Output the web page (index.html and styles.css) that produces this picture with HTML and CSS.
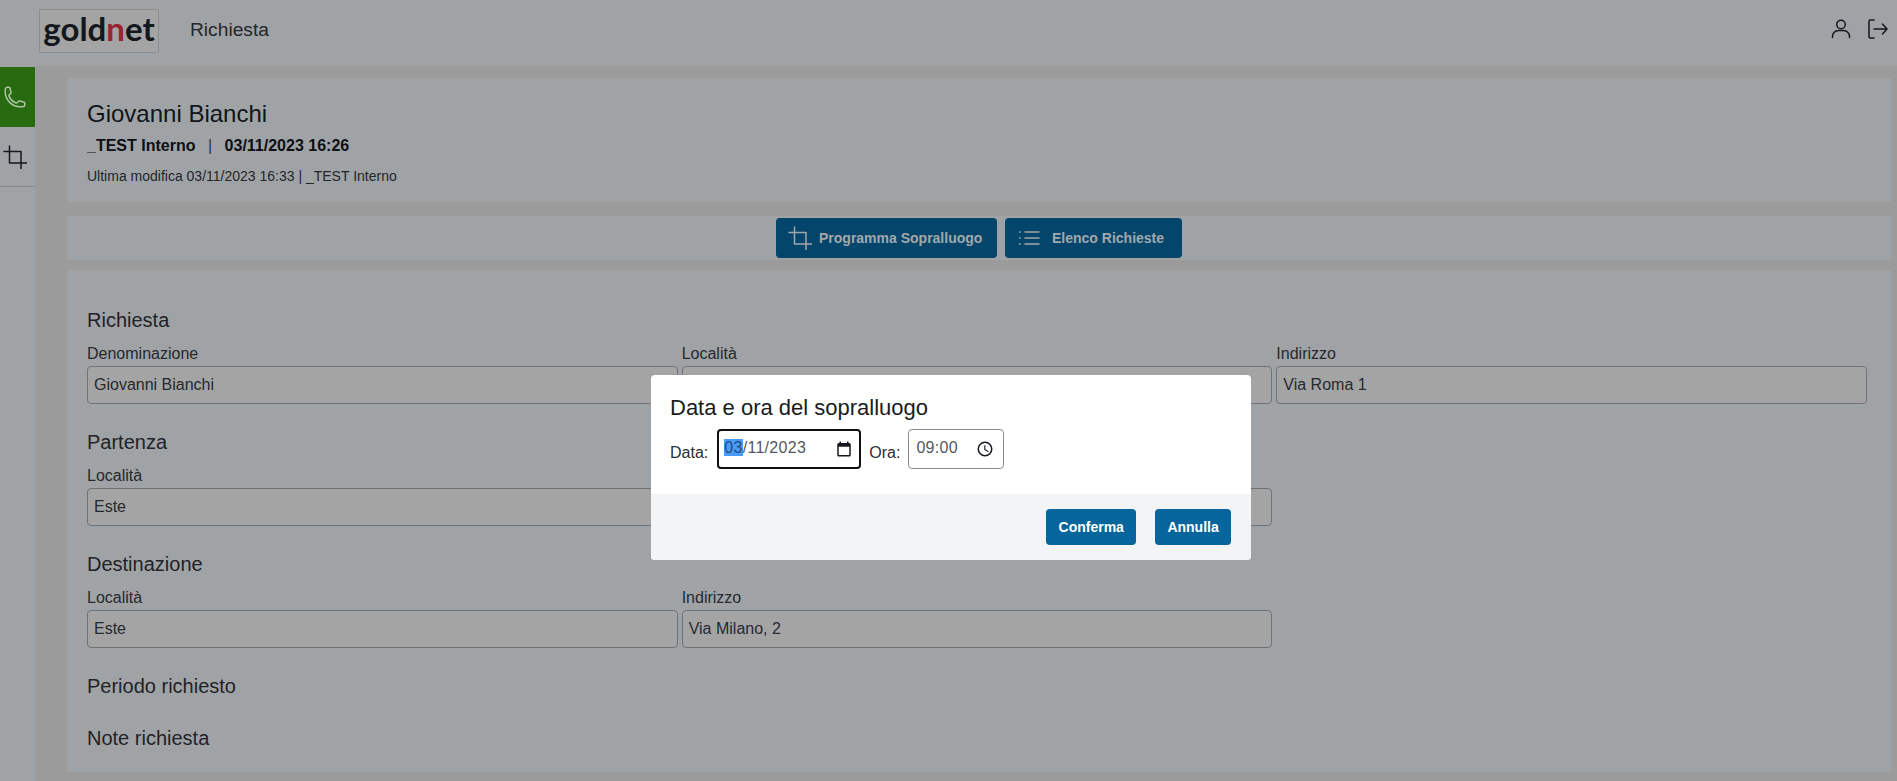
FILE: index.html
```html
<!DOCTYPE html>
<html lang="it">
<head>
<meta charset="utf-8">
<title>Richiesta</title>
<link rel="stylesheet" href="styles.css">
</head>
<body>
<header class="topbar">
  <div class="logo">gold<span class="logo-n">n</span>et</div>
  <div class="page-title">Richiesta</div>
  <div class="top-icons">
    <svg class="icon" viewBox="0 0 24 24"><circle cx="12" cy="7.5" r="4.25"/><path d="M3.5 20.5v-1a6 6 0 0 1 6-6h5a6 6 0 0 1 6 6v1"/></svg>
    <svg class="icon" viewBox="0 0 24 24"><path d="M9 3H5a2 2 0 0 0-1 1v16a2 2 0 0 0 1 1h4"/><path d="M9 12h13M17.5 7l4.5 5-4.5 5"/></svg>
  </div>
</header>
<div class="shell">
  <nav class="sidebar">
    <div class="side-item side-active">
      <svg class="icon" viewBox="0 0 24 24"><path d="M2.25 6.75c0 8.284 6.716 15 15 15h2.25a2.25 2.25 0 002.25-2.25v-1.372c0-.516-.351-.966-.852-1.091l-4.423-1.106c-.44-.11-.902.055-1.173.417l-.97 1.293c-.282.376-.769.542-1.21.38a12.035 12.035 0 01-7.143-7.143c-.162-.441.004-.928.38-1.21l1.293-.97c.363-.271.527-.734.417-1.173L6.963 3.102a1.125 1.125 0 00-1.091-.852H4.5A2.25 2.25 0 002.25 4.5v2.25z"/></svg>
    </div>
    <div class="side-item side-last">
      <svg class="icon" viewBox="0 0 24 24"><path d="M6.5 1v17H24"/><path d="M1 6.5h17V24"/></svg>
    </div>
  </nav>
  <main class="content">
    <section class="panel panel-head">
      <h1 class="name">Giovanni Bianchi</h1>
      <p class="meta"><span>_TEST Interno</span><span class="sep">|</span><span>03/11/2023 16:26</span></p>
      <p class="edited">Ultima modifica 03/11/2023 16:33 | _TEST Interno</p>
    </section>
    <section class="panel panel-actions">
      <button class="action action-first">
        <svg class="icon" viewBox="0 0 24 24"><path d="M6.5 1v17H24"/><path d="M1 6.5h17V24"/></svg>
        <span>Programma Sopralluogo</span>
      </button>
      <button class="action action-second">
        <svg class="icon" viewBox="0 0 24 24"><path d="M8 6h14M8 12h14M8 18h14M2.5 6h.6M2.5 12h.6M2.5 18h.6"/></svg>
        <span>Elenco Richieste</span>
      </button>
    </section>
    <section class="panel panel-form">
      <h2 class="group-title">Richiesta</h2>
      <div class="fields">
        <label class="field"><span class="field-label">Denominazione</span><span class="field-box">Giovanni Bianchi</span></label>
        <label class="field"><span class="field-label">Località</span><span class="field-box">Este</span></label>
        <label class="field"><span class="field-label">Indirizzo</span><span class="field-box">Via Roma 1</span></label>
      </div>
      <h2 class="group-title">Partenza</h2>
      <div class="fields">
        <label class="field"><span class="field-label">Località</span><span class="field-box">Este</span></label>
        <label class="field"><span class="field-label">Indirizzo</span><span class="field-box">Via Roma 1</span></label>
      </div>
      <h2 class="group-title">Destinazione</h2>
      <div class="fields">
        <label class="field"><span class="field-label">Località</span><span class="field-box">Este</span></label>
        <label class="field"><span class="field-label">Indirizzo</span><span class="field-box">Via Milano, 2</span></label>
      </div>
      <h2 class="group-title">Periodo richiesto</h2>
      <h2 class="group-title">Note richiesta</h2>
    </section>
  </main>
</div>
<div class="dialog" role="dialog">
  <div class="dialog-body">
    <h3 class="dialog-title">Data e ora del sopralluogo</h3>
    <div class="dialog-row">
      <span class="dialog-label">Data:</span>
      <div class="picker picker-date">
        <span class="picker-value"><span class="picker-selected">03</span>/11/2023</span>
        <svg class="picker-icon" viewBox="0 0 24 24"><path class="solid" d="M19 4h-1V2h-2v2H8V2H6v2H5a2 2 0 0 0-2 2v14a2 2 0 0 0 2 2h14a2 2 0 0 0 2-2V6a2 2 0 0 0-2-2zm0 16H5V9h14v11z"/></svg>
      </div>
      <span class="dialog-label">Ora:</span>
      <div class="picker picker-time">
        <span class="picker-value">09:00</span>
        <svg class="picker-icon" viewBox="0 0 24 24"><path class="solid" d="M12 2a10 10 0 1 0 0 20 10 10 0 0 0 0-20zm0 18a8 8 0 1 1 0-16 8 8 0 0 1 0 16zm.5-13H11v6l5.2 3.2.8-1.3-4.5-2.7V7z"/></svg>
      </div>
    </div>
  </div>
  <div class="dialog-footer">
    <button class="dialog-btn">Conferma</button>
    <button class="dialog-btn">Annulla</button>
  </div>
</div>
</body>
</html>
```
FILE: styles.css
```css
* { box-sizing: border-box; }
html, body { margin: 0; height: 781px; overflow: hidden; }
body {
  font-family: "Liberation Sans", Arial, sans-serif;
  font-size: 16px;
  color: #15181d;
  background: #9b9b9b;
  display: flex;
  flex-direction: column;
}
h1, h2, h3, p { margin: 0; font-weight: 400; }
.icon {
  width: 24px;
  height: 24px;
  fill: none;
  stroke: currentColor;
  stroke-width: 1.5;
  stroke-linecap: round;
  stroke-linejoin: round;
  flex: none;
}
.topbar {
  height: 66px;
  background: #9fa3a6;
  display: flex;
  align-items: flex-start;
  padding-left: 39px;
  flex: none;
}
.logo {
  width: 120px;
  height: 44px;
  margin-top: 9px;
  background: #a4a4a4;
  border: 1px solid #8c8d8e;
  font-family: Lato, "Liberation Sans", sans-serif;
  font-size: 33px;
  font-weight: 700;
  line-height: 36px;
  text-align: center;
  color: #14171c;
}
.logo-n { color: #9c2232; }
.page-title {
  margin-left: 31px;
  margin-top: 18px;
  font-size: 19.2px;
  line-height: 24px;
  color: #23262b;
}
.top-icons {
  margin-left: auto;
  margin-top: 17px;
  margin-right: 8px;
  display: flex;
  gap: 12px;
  color: #15181d;
}
.shell { flex: 1; display: flex; min-height: 0; }
.sidebar { width: 35px; background: #9fa3a6; flex: none; padding-top: 1px; }
.side-item { height: 60px; display: flex; align-items: center; padding-left: 3px; }
.side-active { background: #276a10; color: #aec4a4; }
.side-last { height: 60px; border-bottom: 1px solid #85898c; color: #15181d; }
.content { flex: 1; padding: 12px 6px 0 32px; min-width: 0; }
.panel { background: #9fa3a6; }
.panel-head { height: 124px; padding: 22px 20px 0; }
.name { font-size: 24px; line-height: 28px; color: #111419; }
.meta { margin-top: 6px; font-size: 16px; line-height: 24px; font-weight: 700; color: #0d0f13; }
.sep { margin: 0 12.5px; font-weight: 400; color: #30343a; }
.edited { margin-top: 8px; font-size: 14px; line-height: 20px; color: #23262b; }
.panel-actions {
  height: 44px;
  margin-top: 14px;
  padding: 2px 0 0 709px;
  display: flex;
  align-items: flex-start;
  gap: 8px;
}
.action {
  height: 40px;
  border: 0;
  border-radius: 4px;
  background: #03456b;
  color: #a3a8ab;
  font: 700 14px/20px "Liberation Sans", Arial, sans-serif;
  display: flex;
  align-items: center;
  padding: 0;
  padding-left: 12px;
}
.action-first { width: 221px; gap: 7px; }
.action-second { width: 177px; gap: 11px; padding-left: 12px; }
.panel-form { height: 502px; margin-top: 10px; padding: 36px 24px 0 20px; }
.group-title { font-size: 20px; line-height: 28px; color: #1f2227; margin-bottom: 24px; }
.fields + .group-title { margin-top: 24px; }
.group-title:has(+ .fields) { margin-bottom: 8px; }
.fields { display: grid; grid-template-columns: repeat(3, 1fr); gap: 4px; }
.field { display: flex; flex-direction: column; }
.field-label { line-height: 24px; color: #26292e; }
.field-box {
  display: flex;
  align-items: center;
  height: 38px;
  padding: 0 6px;
  border: 1px solid #6f7378;
  border-radius: 4px;
  background: #a5a4a4;
  color: #26292e;
}
.dialog {
  position: absolute;
  left: 651px;
  top: 375px;
  width: 600px;
  height: 185px;
  background: #fff;
  border-radius: 4px;
  overflow: hidden;
  display: flex;
  flex-direction: column;
}
.dialog-body { height: 119px; padding: 19px 19px 0; }
.dialog-title { font-size: 22px; line-height: 28px; color: #1a1c20; }
.dialog-row { margin-top: 7px; display: flex; align-items: flex-start; }
.dialog-label { font-size: 16px; line-height: 24px; margin-top: 12px; color: #2b2e33; }
.picker {
  height: 40px;
  display: flex;
  align-items: center;
  justify-content: space-between;
  background: #fff;
  font-size: 16px;
  color: #55585d;
}
.picker-date {
  width: 144px;
  margin-left: 9px;
  margin-right: 8px;
  padding: 0 6px 0 5px;
  border: 2px solid #101010;
  border-radius: 4px;
}
.picker-time {
  width: 96px;
  margin-left: 8px;
  padding: 0 9px 0 7px;
  border: 1px solid #8d8f92;
  border-radius: 4px;
}
.picker-value { letter-spacing: 0.3px; margin-top: -2px; }
.picker-selected { background: #4a9bf5; color: #254a80; }
.picker-icon { width: 18px; height: 18px; }
.solid { fill: #15181d; }
.dialog-footer {
  flex: 1;
  background: #f3f4f6;
  display: flex;
  justify-content: flex-end;
  align-items: flex-start;
  gap: 19px;
  padding: 15px 20px 0 0;
}
.dialog-btn {
  height: 36px;
  padding: 0 12.25px;
  border: 0;
  border-radius: 4px;
  background: #05659c;
  color: #fff;
  font: 700 14px/20px "Liberation Sans", Arial, sans-serif;
}
```
